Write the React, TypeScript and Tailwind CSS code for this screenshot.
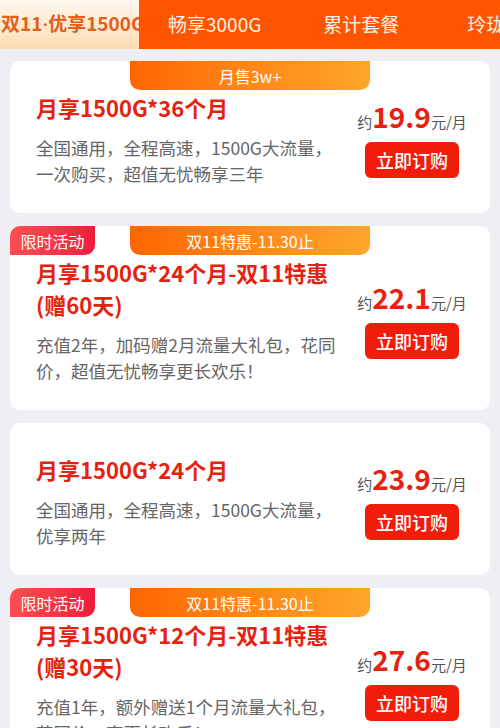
import React from "react";

type Plan = {
  title: string;
  desc: string;
  price: string;
  top?: string;
  limited?: boolean;
};

const plans: Plan[] = [
  {
    title: "月享1500G*36个月",
    desc: "全国通用，全程高速，1500G大流量，一次购买，超值无忧畅享三年",
    price: "19.9",
    top: "月售3w+",
  },
  {
    title: "月享1500G*24个月-双11特惠(赠60天)",
    desc: "充值2年，加码赠2月流量大礼包，花同价，超值无忧畅享更长欢乐！",
    price: "22.1",
    top: "双11特惠-11.30止",
    limited: true,
  },
  {
    title: "月享1500G*24个月",
    desc: "全国通用，全程高速，1500G大流量，优享两年",
    price: "23.9",
  },
  {
    title: "月享1500G*12个月-双11特惠(赠30天)",
    desc: "充值1年，额外赠送1个月流量大礼包，花同价，享更长欢乐！",
    price: "27.6",
    top: "双11特惠-11.30止",
    limited: true,
  },
];

const font = { fontFamily: '"Noto Sans CJK SC", "Noto Sans", sans-serif' };

function Card({ p }: { p: Plan }) {
  return (
    <div className="relative shrink-0 rounded-[10px] bg-white pt-[30px] pb-[26px] px-[26px] flex items-center">
      {p.limited && (
        <div className="absolute left-0 top-0 w-[85px] h-[29px] rounded-tl-[10px] rounded-br-[10px] bg-gradient-to-r from-[#ff4d52] to-[#ee1a3c] flex items-center justify-center text-white text-[16px] leading-none">
          限时活动
        </div>
      )}
      {p.top && (
        <div className="absolute left-[120px] top-0 w-[240px] h-[29px] rounded-b-[10px] bg-gradient-to-r from-[#ff6500] to-[#ffa627] flex items-center justify-center text-white text-[16px] leading-none">
          {p.top}
        </div>
      )}
      <div className="w-[305px]">
        <div className="text-[22px] leading-[32px] font-bold text-[#e6220e]">{p.title}</div>
        <div className="mt-[12px] text-[17.5px] leading-[26px] text-[#666666]">{p.desc}</div>
      </div>
      <div className="ml-auto w-[104px] flex flex-col items-center">
        <div className="flex items-baseline whitespace-nowrap">
          <span className="text-[15px] text-[#555555]">约</span>
          <span className="text-[28px] leading-[32px] font-bold text-[#e6220e]">{p.price}</span>
          <span className="text-[15px] text-[#555555]">元/月</span>
        </div>
        <div className="mt-[9px] w-[94px] h-[36px] rounded-[6px] bg-[#f11c0a] flex items-center justify-center text-white text-[18px] font-medium">
          立即订购
        </div>
      </div>
    </div>
  );
}

export default function App() {
  return (
    <div className="w-[500px] h-[728px] overflow-hidden bg-[#efeef5]" style={font}>
      <div className="h-[49px] bg-[#ff5500] flex items-center overflow-hidden whitespace-nowrap text-[19px]">
        <div className="w-[139px] h-full shrink-0 overflow-hidden bg-gradient-to-b from-[#fff7ee] to-[#fddcb2] flex items-center">
          <span className="text-[#e0611c] font-bold pl-[1px]">
            双11<span className="font-[Roboto]">·</span>优享1500G
          </span>
        </div>
        <div className="shrink-0 pl-[29px] pr-[30px] text-[#fff0e6]">畅享3000G</div>
        <div className="shrink-0 pl-[32px] pr-[30px] text-[#fff0e6]">累计套餐</div>
        <div className="shrink-0 pl-[38px] text-[#fff0e6]">玲珑卡</div>
      </div>
      <div className="flex flex-col gap-[13px] px-[10px] pt-[12px]">
        {plans.map((p, i) => (
          <Card key={i} p={p} />
        ))}
      </div>
    </div>
  );
}
